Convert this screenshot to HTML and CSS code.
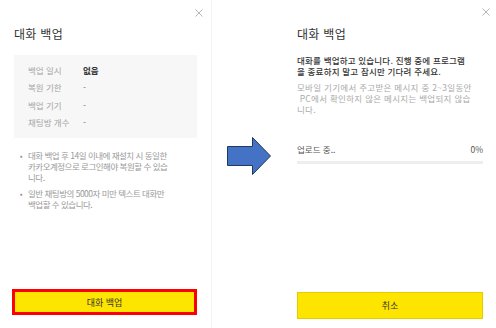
FILE: index.html
```html
<!DOCTYPE html>
<html lang="ko">
<head>
<meta charset="UTF-8" />
<meta name="viewport" content="width=device-width, initial-scale=1" />
<title>대화 백업</title>
<link rel="stylesheet" href="styles.css">
</head>
<body>

<div class="page">
  <!-- 백업 시작 전 -->
  <section class="dialog dialog-left">
    <button class="close-btn" aria-label="닫기">
      <svg width="8" height="8" viewBox="0 0 8 8"><path d="M0.5 0.5L7.5 7.5M7.5 0.5L0.5 7.5" stroke="#b5b5b5" stroke-width="1"/></svg>
    </button>
    <h1 class="dialog-title">대화 백업</h1>

    <dl class="info-box">
      <div class="info-row"><dt>백업 일시</dt><dd class="strong">없음</dd></div>
      <div class="info-row"><dt>복원 기한</dt><dd>-</dd></div>
      <div class="info-row"><dt>백업 기기</dt><dd>-</dd></div>
      <div class="info-row"><dt>채팅방 개수</dt><dd>-</dd></div>
    </dl>

    <ul class="notes">
      <li><span class="dot">•</span><span>대화 백업 후 14일 이내에 재설치 시 동일한<br>카카오계정으로 로그인해야 복원할 수 있습<br>니다.</span></li>
      <li><span class="dot">•</span><span>일반 채팅방의 5000자 미만 텍스트 대화만<br>백업할 수 있습니다.</span></li>
    </ul>

    <button class="btn-primary btn-marked">대화 백업</button>
  </section>

  <div class="arrow-area">
    <svg width="45" height="39" viewBox="0 0 45 39">
      <polygon points="0.5,9.5 25.5,9.5 25.5,0.5 43.5,19 25.5,37.5 25.5,28.5 0.5,28.5" fill="#4472c4" stroke="#1f3864" stroke-width="1"/>
    </svg>
  </div>

  <!-- 백업 진행 중 -->
  <section class="dialog dialog-right">
    <button class="close-btn" aria-label="닫기">
      <svg width="8" height="8" viewBox="0 0 8 8"><path d="M0.5 0.5L7.5 7.5M7.5 0.5L0.5 7.5" stroke="#b5b5b5" stroke-width="1"/></svg>
    </button>
    <h1 class="dialog-title">대화 백업</h1>

    <p class="msg-main">대화를 백업하고 있습니다. 진행 중에 프로그램<br>을 종료하지 말고 잠시만 기다려 주세요.</p>
    <p class="msg-sub">모바일 기기에서 주고받은 메시지 중 2~3일동안<br>&nbsp;PC에서 확인하지 않은 메시지는 백업되지 않습<br>니다.</p>

    <div class="progress-head">
      <span>업로드 중..</span>
      <span>0%</span>
    </div>
    <div class="progress-track"><div class="progress-fill" style="width: 0%"></div></div>

    <button class="btn-primary btn-cancel">취소</button>
  </section>
</div>

</body>
</html>
```

FILE: styles.css
```css
* {
  box-sizing: border-box;
  margin: 0; padding: 0;
}
body {
  font-family: "Noto Sans CJK KR", "Noto Sans", sans-serif;
  background: #fff;
  color: #333;
  width: 496px;
  height: 328px;
  overflow: hidden;
}
.page {
  display: flex;
  height: 328px;
}
.dialog {
  position: relative;
  display: flex;
  flex-direction: column;
  height: 100%;
  padding: 26px 14px 0 14px;
}
.dialog-left {
  width: 212px;
  padding-bottom: 13px;
  border-right: 1px solid #f3f3f3;
}
.dialog-right {
  width: 213px;
  padding-right: 13px;
  padding-bottom: 9px;
}
.arrow-area {
  width: 71px;
  padding: 137px 0 0 15px;
}
.close-btn {
  position: absolute;
  top: 9px;
  right: 7px;
  background: none;
  border: none;
  width: 9px;
  height: 9px;
  display: flex;
}
.dialog-right .close-btn {
  top: 8px;
  right: 5px;
}
.dialog-title {
  font-size: 12px;
  font-weight: 400;
  line-height: 16px;
  color: #333;
  letter-spacing: 0.3px;
}

/* 백업 정보 */
.info-box {
  margin-top: 13px;
  background: #f7f7f7;
  padding: 7px 14px;
}
.info-row {
  display: flex;
  font-size: 8.5px;
  line-height: 17.3px;
}
.info-row dt {
  width: 55px;
  color: #a5a5a5;
}
.info-row dd {
  color: #777;
}
.info-row dd.strong {
  color: #333;
  font-weight: 700;
}

.notes {
  list-style: none;
  margin-top: 11.5px;
  display: flex;
  flex-direction: column;
  gap: 5px;
  font-size: 8.5px;
  line-height: 11px;
  color: #999;
  letter-spacing: -0.5px;
}
.notes li {
  display: flex;
  white-space: nowrap;
}
.notes .dot {
  width: 14px;
  text-align: center;
}

/* 진행 중 */
.msg-main {
  margin-top: 12.5px;
  font-size: 8.5px;
  line-height: 11px;
  color: #333;
  font-weight: 500;
  white-space: nowrap;
  letter-spacing: 0.2px;
}
.msg-sub {
  margin-top: 5px;
  font-size: 8.5px;
  line-height: 11px;
  color: #aaa;
  white-space: nowrap;
  letter-spacing: 0.3px;
}
.progress-head {
  margin-top: 29px;
  display: flex;
  justify-content: space-between;
  font-size: 8.5px;
  line-height: 11px;
  color: #555;
}
.progress-track {
  margin-top: 6.5px;
  height: 3px;
  background: #eee;
}
.progress-fill {
  height: 100%;
  background: #fee500;
}

/* 버튼 */
.btn-primary {
  margin-top: auto;
  background: #fee500;
  border: none;
  font-family: inherit;
  font-size: 9px;
  color: #333;
  cursor: pointer;
}
.btn-marked {
  height: 26px;
  margin-left: -2px;
  border: 3px solid #ff0000;
}
.btn-cancel {
  height: 27px;
  border: 1px solid #e3cd00;
}
```
